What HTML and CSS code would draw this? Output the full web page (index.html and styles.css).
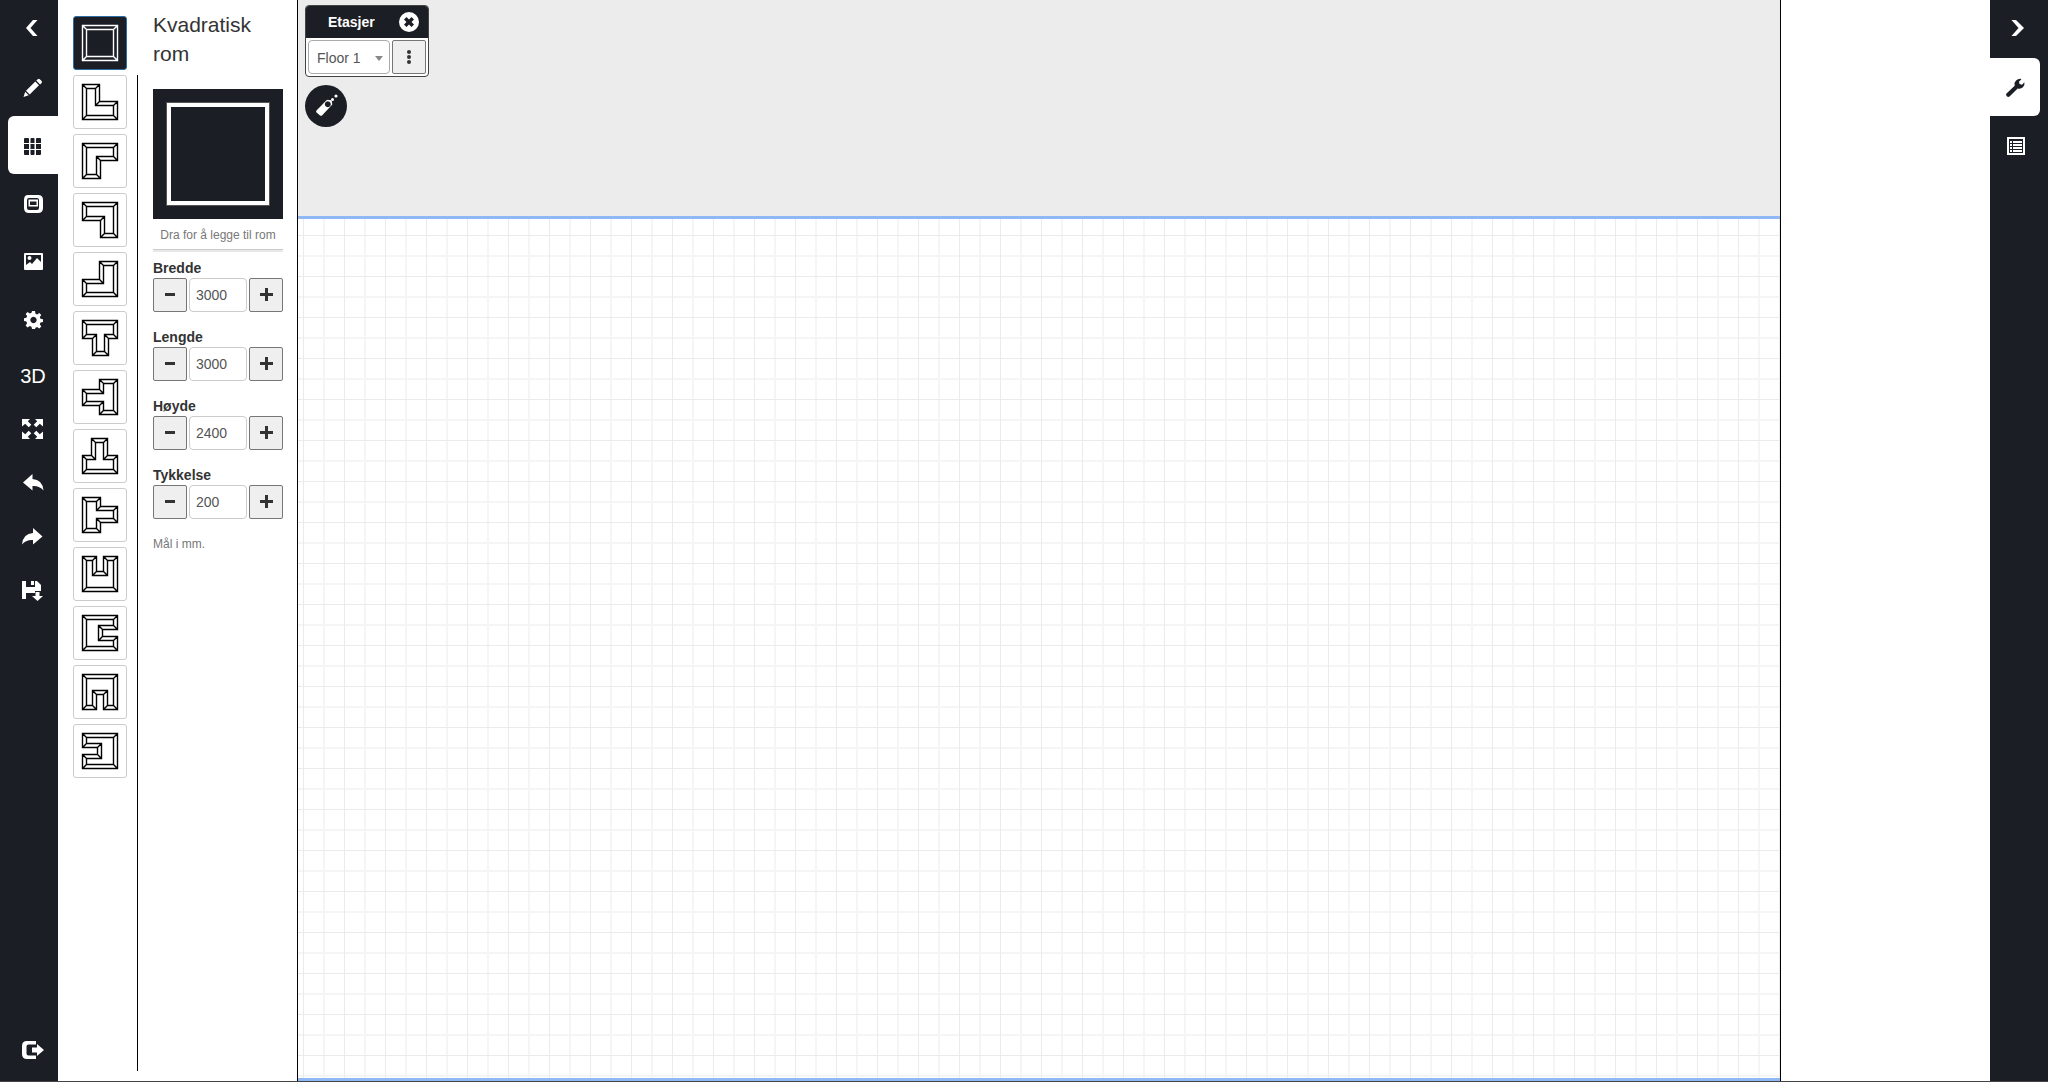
FILE: index.html
```html
<!DOCTYPE html>
<html lang="no">
<head>
    <meta charset="UTF-8">
    <meta name="viewport" content="width=device-width, initial-scale=1.0">
    <title>Plantegning</title>
    <link rel="stylesheet" href="styles.css">
</head>
<body>

    <!-- Room shapes, turned with rotate() for the variants -->
    <svg class="defs" aria-hidden="true">
        <g id="room-square">
            <path d="M1.5 1.5h35v35h-35zM5.5 5.5h27v27h-27zM1.5 1.5l4 4M36.5 1.5l-4 4M36.5 36.5l-4-4M1.5 36.5l4-4"/>
        </g>
        <g id="room-l">
            <path d="M1.5 1.5h17v17h18v18h-35zM5.5 5.5h9v17h18v10h-27zM1.5 1.5l4 4M18.5 1.5l-4 4M18.5 18.5l-4 4M36.5 18.5l-4 4M36.5 36.5l-4-4M1.5 36.5l4-4"/>
        </g>
        <g id="room-t">
            <path d="M1.5 1.5h35v18h-9v17h-16v-17h-10zM5.5 5.5h27v10h-9v17h-8v-17h-10zM1.5 1.5l4 4M36.5 1.5l-4 4M36.5 19.5l-4-4M27.5 19.5l-4-4M27.5 36.5l-4-4M11.5 36.5l4-4M11.5 19.5l4-4M1.5 19.5l4-4"/>
        </g>
        <g id="room-u">
            <path d="M1.5 1.5h14v15h7v-15h14v35h-35zM5.5 5.5h6v15h15v-15h6v27h-27zM1.5 1.5l4 4M15.5 1.5l-4 4M15.5 16.5l-4 4M22.5 16.5l4 4M22.5 1.5l4 4M36.5 1.5l-4 4M36.5 36.5l-4-4M1.5 36.5l4-4"/>
        </g>
    </svg>

    <div class="app">
        <nav class="sidebar sidebar-left">
            <button class="nav-item" aria-label="Skjul"><svg class="icon" viewBox="0 0 24 24"><path d="M12 2h4.500l-7 8 7 8H12l-7-8z"/></svg></button>
            <button class="nav-item" aria-label="Tegn"><svg class="icon" viewBox="0 0 24 24"><path d="M2.500 21l1.700-5.200 3.500 3.500zM5 14.800l9.300-9.300 3.700 3.700-9.300 9.300zM15.300 4.500l1.500-1.300q1-.8 2 0l1.800 1.800q.8 1 0 2l-1.500 1.400z"/></svg></button>
            <button class="nav-item active" aria-label="Rom"><svg class="icon" viewBox="0 0 24 24"><path d="M4 4h3q1 0 1 1v4H3V5q0-1 1-1zM10.500 4h2q1 0 1 1v4h-4V5q0-1 1-1zM16 4h3q1 0 1 1v4h-5V5q0-1 1-1zM3 10h5v5H3zM9.500 10h4v5h-4zM15 10h5v5h-5zM3 16h5v5H4q-1 0-1-1zM9.500 16h4v4q0 1-1 1h-2q-1 0-1-1zM15 16h5v4q0 1-1 1h-4z"/></svg></button>
            <button class="nav-item" aria-label="Objekter"><svg class="icon" viewBox="0 0 24 24"><path fill-rule="evenodd" d="M7 3h10q5 0 5 5v8q0 5-5 5H8q-5 0-5-5V8q0-5 4-5zM8 6Q6 6 6 8v8q0 2 2 2h8q2 0 2-2V8q0-2-2-2zM7.500 7.500h9.500v7H7.500zM9 9.500v3.500h6.500V9.500z"/></svg></button>
            <button class="nav-item" aria-label="Bilde"><svg class="icon" viewBox="0 0 24 24"><path fill-rule="evenodd" d="M3 4q0-1 1-1h17q1 0 1 1v15q0 1-1 1H4q-1 0-1-1zM5 5v10l4-3 2 2 5-6 4 4V5zM6.500 8q0-2 2-2t2 2-2 2-2-2z"/></svg></button>
            <button class="nav-item" aria-label="Innstillinger"><svg class="icon" viewBox="0 0 24 24"><path fill-rule="evenodd" d="M11 3h3l.5 2.700 1.600.7 2.200-1.500 2 2-1.500 2.200.7 1.700 2.500.500v2.800l-2.500.5-.7 1.700 1.500 2.200-2 2-2.200-1.500-1.600.7L14 21h-3l-.5-2.300-1.700-.7-2.200 1.500-2-2 1.500-2.200-.7-1.700L3 13.100v-2.800l2.400-.5.700-1.700-1.500-2.200 2-2 2.200 1.500 1.700-.7zM12.500 8.800a3.200 3.200 0 1 0 .01 0z"/></svg></button>
            <button class="nav-item short text">3D</button>
            <button class="nav-item short" aria-label="Fullskjerm"><svg class="icon" viewBox="0 0 24 24"><path d="M1 1h8L6.800 3.200l3.500 3.500-2.600 2.600-3.500-3.500L1 8.500zM22 1h-8l2.200 2.200-3.500 3.500 2.600 2.600 3.500-3.500L22 8.500zM1 21h8l-2.200-2.200 3.500-3.500-2.600-2.600-3.500 3.500L1 13.500zM22 21h-8l2.200-2.200-3.500-3.500 2.600-2.600 3.500 3.500L22 13.500z"/></svg></button>
            <button class="nav-item short" aria-label="Angre"><svg class="icon" viewBox="0 0 24 24"><path d="M2 10.500L11.500 2v5q10 .5 11 11.500-4-5-11-4.500v4.500z"/></svg></button>
            <button class="nav-item short" aria-label="Gjør om"><svg class="icon" viewBox="0 0 24 24"><path d="M21.500 10.500L12 2v5Q2 7.500 1 18.500q4-5 11-4.500v4.500z"/></svg></button>
            <button class="nav-item short" aria-label="Lagre"><svg class="icon" viewBox="0 0 24 24"><path d="M1 1h4v6h9V1h2l4 4v6h-6v2H5v6H1zM10 1h3v4h-3zM14.500 12h4v4h3.500l-5.500 5-5.500-5h3.500z"/></svg></button>
            <button class="nav-item logout" aria-label="Avslutt"><svg class="icon" viewBox="0 0 24 24"><path d="M6 2h9v3.500H7.500q-2 0-2 2v7q0 2 2 2H15V20H6q-5 0-5-5V7q0-5 5-5zM11 8.500h5V5l7 6-7 6v-3.500h-5z"/></svg></button>
        </nav>

        <aside class="panel">
            <div class="shapes">
                <button class="shape selected" aria-label="Kvadratisk rom"><svg viewBox="0 0 38 38"><use href="#room-square"/></svg></button>
                <button class="shape" aria-label="L-rom"><svg viewBox="0 0 38 38"><use href="#room-l"/></svg></button>
                <button class="shape" aria-label="L-rom 90"><svg viewBox="0 0 38 38"><use href="#room-l" transform="rotate(90 19 19)"/></svg></button>
                <button class="shape" aria-label="L-rom 180"><svg viewBox="0 0 38 38"><use href="#room-l" transform="rotate(180 19 19)"/></svg></button>
                <button class="shape" aria-label="L-rom 270"><svg viewBox="0 0 38 38"><use href="#room-l" transform="rotate(270 19 19)"/></svg></button>
                <button class="shape" aria-label="T-rom"><svg viewBox="0 0 38 38"><use href="#room-t"/></svg></button>
                <button class="shape" aria-label="T-rom 90"><svg viewBox="0 0 38 38"><use href="#room-t" transform="rotate(90 19 19)"/></svg></button>
                <button class="shape" aria-label="T-rom 180"><svg viewBox="0 0 38 38"><use href="#room-t" transform="rotate(180 19 19)"/></svg></button>
                <button class="shape" aria-label="T-rom 270"><svg viewBox="0 0 38 38"><use href="#room-t" transform="rotate(270 19 19)"/></svg></button>
                <button class="shape" aria-label="U-rom"><svg viewBox="0 0 38 38"><use href="#room-u"/></svg></button>
                <button class="shape" aria-label="U-rom 90"><svg viewBox="0 0 38 38"><use href="#room-u" transform="rotate(90 19 19)"/></svg></button>
                <button class="shape" aria-label="U-rom 180"><svg viewBox="0 0 38 38"><use href="#room-u" transform="rotate(180 19 19)"/></svg></button>
                <button class="shape" aria-label="U-rom 270"><svg viewBox="0 0 38 38"><use href="#room-u" transform="rotate(270 19 19)"/></svg></button>
            </div>
            <div class="divider"></div>
            <div class="details">
                <h1>Kvadratisk rom</h1>
                <div class="preview"><div class="preview-room"></div></div>
                <p class="hint drag">Dra for å legge til rom</p>
                <hr>
                <div class="field">
                    <label for="bredde">Bredde</label>
                    <div class="stepper">
                        <button aria-label="Mindre"><svg viewBox="0 0 14 14"><path d="M2 5h10v3H2z"/></svg></button>
                        <input type="text" id="bredde" value="3000">
                        <button aria-label="Mer"><svg viewBox="0 0 14 14"><path d="M6 0h3v5h5v3H9v5H6V8H1V5h5z"/></svg></button>
                    </div>
                </div>
                <div class="field">
                    <label for="lengde">Lengde</label>
                    <div class="stepper">
                        <button aria-label="Mindre"><svg viewBox="0 0 14 14"><path d="M2 5h10v3H2z"/></svg></button>
                        <input type="text" id="lengde" value="3000">
                        <button aria-label="Mer"><svg viewBox="0 0 14 14"><path d="M6 0h3v5h5v3H9v5H6V8H1V5h5z"/></svg></button>
                    </div>
                </div>
                <div class="field">
                    <label for="hoyde">Høyde</label>
                    <div class="stepper">
                        <button aria-label="Mindre"><svg viewBox="0 0 14 14"><path d="M2 5h10v3H2z"/></svg></button>
                        <input type="text" id="hoyde" value="2400">
                        <button aria-label="Mer"><svg viewBox="0 0 14 14"><path d="M6 0h3v5h5v3H9v5H6V8H1V5h5z"/></svg></button>
                    </div>
                </div>
                <div class="field">
                    <label for="tykkelse">Tykkelse</label>
                    <div class="stepper">
                        <button aria-label="Mindre"><svg viewBox="0 0 14 14"><path d="M2 5h10v3H2z"/></svg></button>
                        <input type="text" id="tykkelse" value="200">
                        <button aria-label="Mer"><svg viewBox="0 0 14 14"><path d="M6 0h3v5h5v3H9v5H6V8H1V5h5z"/></svg></button>
                    </div>
                </div>
                <p class="hint">Mål i mm.</p>
            </div>
        </aside>

        <main class="canvas">
            <div class="paper"></div>
            <div class="tools">
                <section class="floors">
                    <header>
                        <h2>Etasjer</h2>
                        <button class="close" aria-label="Lukk"><svg viewBox="0 0 20 20"><circle cx="10" cy="10" r="10"/><path d="M5 7.500L7.500 5 10 7.500 12.500 5 15 7.500 12.500 10 15 12.500 12.500 15 10 12.500 7.500 15 5 12.500 7.500 10z"/></svg></button>
                    </header>
                    <div class="floor-row">
                        <div class="select-wrap">
                            <select aria-label="Etasje"><option>Floor 1</option></select>
                            <svg class="caret" viewBox="0 0 8 5"><path d="M0 0h8L4 5z"/></svg>
                        </div>
                        <button class="more" aria-label="Flere valg"><svg viewBox="0 0 4 14"><circle cx="2" cy="2" r="2"/><circle cx="2" cy="7" r="2"/><circle cx="2" cy="12" r="2"/></svg></button>
                    </div>
                </section>
                <button class="laser" aria-label="Lasermåler"><svg viewBox="0 0 42 42"><path fill-rule="evenodd" d="M11.500 25.500l9.500-9.800q1-1 2.500-.8l3 .3q.6 1.200.8 4.300l-10.300 11q-1 .7-2 0l-3.500-3q-.8-1 0-2zM22.800 16.300a3 3 0 1 0 .01 0z"/><circle cx="27.500" cy="14.500" r="1.500"/><circle cx="31" cy="11" r="1.600"/></svg></button>
            </div>
        </main>

        <aside class="properties"></aside>

        <nav class="sidebar sidebar-right">
            <button class="nav-item" aria-label="Skjul"><svg class="icon" viewBox="0 0 24 24"><path d="M13 2H8.500l7 8-7 8H13l8-8z"/></svg></button>
            <button class="nav-item active" aria-label="Egenskaper"><svg class="icon" viewBox="0 0 24 24"><path d="M3.500 17.500l8.200-7.700q-1-3 1.300-5.200Q15.500 2.300 18.500 3l-2.500 2.800.5 2.300 2.500.6 2.400-2.500q.6 3-1.500 5-2.200 2-5.200 1.200L6.500 20.500q-1.200 1-2.700-.2-1.500-1.600-.3-2.800z"/></svg></button>
            <button class="nav-item" aria-label="Liste"><svg class="icon" viewBox="0 0 24 24"><path fill-rule="evenodd" d="M4 3h18v18H4zM6 5v14h14V5zM7 7h2v2H7zM10 7h9v2h-9zM7 10h2v2H7zM10 10h9v2h-9zM7 13h2v2H7zM10 13h9v2h-9zM7 16h2v2H7zM10 16h9v2h-9z"/></svg></button>
        </nav>
    </div>

</body>
</html>
```
FILE: styles.css
```css
* {
    box-sizing: border-box;
}
body {
    margin: 0;
    font-family: "Liberation Sans", Arial, sans-serif;
    font-size: 14px;
    line-height: 20px;
    color: #333;
    background-color: #fff;
}
button, input, select {
    font: inherit;
    margin: 0;
    padding: 0;
}
button {
    cursor: pointer;
}
.defs {
    position: absolute;
    width: 0;
    height: 0;
}
.app {
    display: flex;
    height: 100vh;
    border-bottom: 1px solid #444;
}

/* Sidebars */
.sidebar {
    display: flex;
    flex-direction: column;
    flex: none;
    width: 58px;
    background-color: #1c1e26;
}
.sidebar-left {
    padding-left: 8px;
}
.sidebar-right {
    padding-right: 8px;
}
.nav-item {
    display: flex;
    align-items: center;
    justify-content: center;
    height: 58px;
    padding-top: 2px;
    border: none;
    background: none;
    color: #fff;
}
.nav-item.short {
    height: 54px;
}
.nav-item.text {
    font-size: 20px;
}
.nav-item.active {
    background-color: #fff;
    color: #1c1e26;
}
.sidebar-left .active {
    border-radius: 6px 0 0 6px;
}
.sidebar-right .active {
    border-radius: 0 6px 6px 0;
}
.nav-item.logout {
    margin-top: auto;
    margin-bottom: 2px;
}
.icon {
    width: 24px;
    height: 24px;
    fill: currentColor;
}

/* Room panel */
.panel {
    display: flex;
    flex: none;
    width: 240px;
    border-right: 1px solid #000;
}
.shapes {
    display: flex;
    flex-direction: column;
    flex: none;
    gap: 5px;
    padding: 16px 10px 0 15px;
}
.shape {
    display: flex;
    align-items: center;
    justify-content: center;
    width: 54px;
    height: 54px;
    border: 1px solid #ccc;
    border-radius: 3px;
    background-color: #fff;
}
.shape svg {
    width: 38px;
    height: 38px;
    fill: none;
    stroke: #000;
    stroke-width: 1.4;
}
.shape.selected {
    background-color: #1c1e26;
    border-color: #2e6da4;
}
.shape.selected svg {
    stroke: #fff;
}
.divider {
    flex: none;
    width: 1px;
    margin: 75px 0 10px;
    background-color: #000;
}
.details {
    flex: 1;
    min-width: 0;
    padding: 10px 14px 0 15px;
}
h1 {
    margin: 0 0 21px;
    font-size: 21px;
    font-weight: normal;
    line-height: 29px;
}
.preview {
    display: flex;
    align-items: center;
    justify-content: center;
    height: 130px;
    background-color: #1c1e26;
}
.preview-room {
    width: 104px;
    height: 104px;
    border: 5px solid #fff;
    outline: 1px solid #555;
    outline-offset: -1px;
}
.hint {
    margin: 0;
    font-size: 12px;
    color: #777;
}
.hint.drag {
    margin: 6px 0 4px;
    text-align: center;
}
hr {
    height: 3px;
    margin: 0 0 6px;
    border: none;
    border-top: 1px solid #ccc;
    background-color: #e8e8e8;
}
.field {
    margin-bottom: 15px;
}
.field label {
    display: block;
    font-weight: bold;
}
.stepper {
    display: flex;
    gap: 2px;
}
.stepper button {
    display: flex;
    align-items: center;
    justify-content: center;
    flex: none;
    width: 34px;
    height: 34px;
    border: 1px solid #767676;
    border-radius: 2px;
    background-color: #efefef;
}
.stepper svg {
    width: 14px;
    height: 14px;
    fill: #333;
}
.stepper input {
    flex: 1;
    min-width: 0;
    height: 34px;
    padding: 0 6px;
    border: 1px solid #ccc;
    border-radius: 4px;
    color: #555;
}

/* Drawing area */
.canvas {
    position: relative;
    flex: 1;
    display: flex;
    padding-top: 216px;
    background-color: #ececec;
}
.paper {
    flex: 1;
    border-top: 3px solid #90b8f4;
    border-bottom: 3px solid #90b8f4;
    background-color: #fff;
    background-image:
        linear-gradient(to right, #ebebeb 1px, transparent 1px),
        linear-gradient(to bottom, #ebebeb 1px, transparent 1px),
        linear-gradient(to right, #f5f5f5 2px, transparent 2px),
        linear-gradient(to bottom, #f5f5f5 2px, transparent 2px);
    background-size: 41px 41px;
    background-position: 5px 0, 0 16px, 25px 0, 0 36px;
}
.tools {
    position: absolute;
    top: 5px;
    left: 7px;
}
.floors {
    width: 124px;
    margin-bottom: 8px;
    border: 1px solid #444;
    border-radius: 4px;
    background-color: #fff;
    overflow: hidden;
}
.floors header {
    display: flex;
    align-items: center;
    justify-content: space-between;
    height: 32px;
    padding: 0 9px 0 22px;
    background-color: #1c1e26;
}
.floors h2 {
    margin: 0;
    font-size: 14px;
    color: #fff;
}
.close {
    display: flex;
    border: none;
    background: none;
}
.close svg {
    width: 20px;
    height: 20px;
    fill: #fff;
}
.close path {
    fill: #1c1e26;
}
.floor-row {
    display: flex;
    gap: 2px;
    padding: 2px;
}
.select-wrap {
    position: relative;
    flex: 1;
}
.select-wrap select {
    width: 100%;
    height: 34px;
    padding: 2px 8px 0;
    border: 1px solid #aaa;
    border-radius: 4px;
    background-color: #fff;
    color: #555;
    appearance: none;
}
.caret {
    position: absolute;
    top: 16px;
    right: 7px;
    width: 8px;
    height: 5px;
    fill: #888;
    pointer-events: none;
}
.more {
    display: flex;
    align-items: center;
    justify-content: center;
    width: 34px;
    height: 34px;
    border: 1px solid #767676;
    border-radius: 2px;
    background-color: #efefef;
}
.more svg {
    width: 4px;
    height: 14px;
    fill: #333;
}
.laser {
    display: block;
    width: 42px;
    height: 42px;
    border: none;
    border-radius: 50%;
    background-color: #1c1e26;
}
.laser svg {
    display: block;
    width: 42px;
    height: 42px;
    fill: #fff;
}

/* Empty until something on the plan is selected */
.properties {
    flex: none;
    width: 210px;
    border-left: 1px solid #000;
}
```
